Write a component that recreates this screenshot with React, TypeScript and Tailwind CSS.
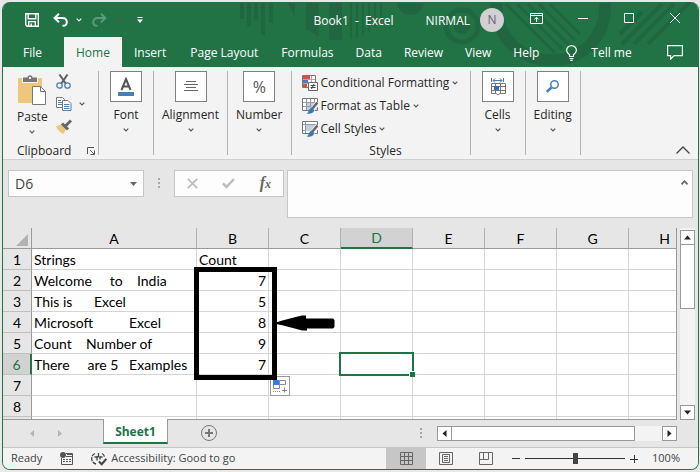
import React from 'react';
import clsx from 'clsx';

const tabs = ['File', 'Home', 'Insert', 'Page Layout', 'Formulas', 'Data', 'Review', 'View', 'Help'];
const wideTabs = ['File', 'Home', 'Insert', 'Page Layout'];

const columns = ['A', 'B', 'C', 'D', 'E', 'F', 'G', 'H'];

const rows: string[][] = [
  ['Strings', 'Count'],
  ['Welcome     to    India', '7'],
  ['This is      Excel', '5'],
  ['Microsoft          Excel', '8'],
  ['Count    Number of', '9'],
  ['There     are 5   Examples', '7'],
  [],
  [],
];

const ACTIVE_COLUMN = 'D';
const ACTIVE_ROW = 6;

function Chevron({ className = 'text-[#555]' }: { className?: string }) {
  return (
    <svg className={clsx('h-1 w-[6px] shrink-0', className)} viewBox="0 0 6 4" fill="none" stroke="currentColor" strokeWidth="1.2" aria-hidden="true">
      <path d="M0.7 0.7 3 3 5.3 0.7" />
    </svg>
  );
}

function TitleArt() {
  return (
    <svg className="pointer-events-none absolute right-0 top-0 h-16 w-[460px]" viewBox="238 2 460 64" aria-hidden="true">
      <g fill="#206741">
        <path d="M240 3h4v16h-4zM247 3h4v23h-4zM254 3h4v17h-4zM261 3h4v32h-4zM269 3h4v20h-4zM288 3h7v14zM306 3h13v34l-13-8zM329 3h13v37h-13z" />
        <path d="M350 3h2v36h-2zM356 3h2v35h-2zM362 3h2v32h-2zM368 3h2v29h-2zM374 3h2v24h-2zM380 3h2v18h-2z" />
        <path d="M397 3h27c-2 16-25 16-27 0z" />
        <circle cx="462" cy="26" r="8" />
      </g>
      <g fill="none" stroke="#206741">
        <circle cx="462" cy="26" r="16" strokeWidth="5" />
        <path d="M497 3c-3 36 27 58 57 57 32-1 53-27 51-57" strokeWidth="12" />
        <path d="M506 4l49 49M517 4l45 45M528 4l42 42M539 4l36 36M550 4l30 30" strokeWidth="3" />
        <path d="M622 44l40-40M634 44l40-40M648 44l42-42M620 34l22-22" strokeWidth="4" />
      </g>
    </svg>
  );
}

function TitleBar() {
  return (
    <div className="relative flex h-[35px] items-center text-xs text-white">
      <div className="flex flex-1 items-center pl-[22px]">
        <button type="button" aria-label="Save" className="mr-[14px]">
          <svg className="h-[14px] w-[14px]" viewBox="0 0 14 14" fill="none" stroke="currentColor" strokeWidth="1.4">
            <path d="M0.7 0.7h12.6v12.6H2.2L0.7 11.8zM3.2 0.7v5h7.6v-5M3.7 13.3V8.6h6.6v4.7M6.2 10.5v2.8" />
          </svg>
        </button>
        <button type="button" aria-label="Undo" className="flex items-center gap-2">
          <svg className="h-[14px] w-[15px]" viewBox="0 0 15 14" fill="none" stroke="currentColor" strokeWidth="2">
            <path d="M6 0.8 1.6 5 6 9.2M1.8 5h7.4c3 0 4.6 1.8 4.6 4.2 0 2-1.5 3.6-4.3 3.6" />
          </svg>
          <Chevron className="text-white" />
        </button>
        <button type="button" aria-label="Redo" className="ml-[10px] flex items-center gap-2 text-[#5a9a78]" disabled>
          <svg className="h-[14px] w-[15px]" viewBox="0 0 15 14" fill="none" stroke="currentColor" strokeWidth="2">
            <path d="M9 0.8 13.4 5 9 9.2M13.2 5H5.8C2.8 5 1.2 6.8 1.2 9.2c0 2 1.5 3.6 4.3 3.6" />
          </svg>
          <Chevron />
        </button>
        <button type="button" aria-label="Customize Quick Access Toolbar" className="ml-4">
          <svg className="h-[6px] w-[6px]" viewBox="0 0 6 6" fill="currentColor">
            <path d="M0.5 0h5v1h-5zM0 2.500h6L3 6z" />
          </svg>
        </button>
      </div>
      <div className="ml-4 whitespace-pre pt-[3px]">Book1  -  Excel</div>
      <div className="flex flex-1 items-center pl-8">
        <span className="pt-[3px]">NIRMAL</span>
        <button type="button" className="ml-[10px] h-6 w-6 shrink-0 rounded-full bg-[#d2d0d2] text-xs text-[#6b5f75]">N</button>
        <div className="ml-auto flex items-center gap-9 pb-[3px] pr-[18px]">
          <button type="button" aria-label="Ribbon Display Options" className="-mr-px">
            <svg className="h-[11px] w-[13px]" viewBox="0 0 13 11" fill="none" stroke="currentColor">
              <path d="M0.5 0.5h12v10h-12zM0.5 2.500h12M6.500 9V4.500M4.300 6.500l2.200-2.200 2.200 2.200" />
            </svg>
          </button>
          <button type="button" aria-label="Minimize">
            <svg className="h-[11px] w-[10px]" viewBox="0 0 10 11" stroke="currentColor"><path d="M0 5.500h10" /></svg>
          </button>
          <button type="button" aria-label="Maximize">
            <svg className="h-[10px] w-[10px]" viewBox="0 0 10 10" fill="none" stroke="currentColor"><path d="M0.5 0.5h9v9h-9z" /></svg>
          </button>
          <button type="button" aria-label="Close">
            <svg className="h-[10px] w-[10px]" viewBox="0 0 10 10" stroke="currentColor"><path d="M0 0l10 10M10 0L0 10" /></svg>
          </button>
        </div>
      </div>
    </div>
  );
}

function TabBar() {
  return (
    <div className="relative flex h-[30px] items-stretch pl-2 text-xs text-white">
      {tabs.map((tab) => (
        <button
          key={tab}
          type="button"
          className={clsx(
            'whitespace-nowrap pt-px',
            wideTabs.includes(tab) ? 'px-3' : 'px-[11px]',
            tab === 'Home' && 'bg-[#f3f3f3] text-[#217346]',
            tab === 'File' && 'mr-[10px]'
          )}
        >
          {tab}
        </button>
      ))}
      <button type="button" className="ml-4 flex items-center gap-[14px] whitespace-nowrap pt-px">
        <svg className="h-4 w-[11px]" viewBox="0 0 11 16" fill="none" stroke="currentColor" strokeWidth="1.2">
          <path d="M3.5 11.5v-1.7C1.800 8.500 0.600 7.200 0.600 5.300a4.900 4.700 0 0 1 9.800 0c0 1.900-1.200 3.200-2.900 4.500v1.700zM3.500 13.500h4M4.200 15.400h2.600" />
        </svg>
        Tell me
      </button>
      <button type="button" aria-label="Comments" className="ml-auto mr-[15px]">
        <svg className="h-[15px] w-4" viewBox="0 0 16 15" fill="none" stroke="currentColor" strokeWidth="1.2">
          <path d="M0.6 0.6h14.8v10H7l-3.400 3.500v-3.500h-3z" />
        </svg>
      </button>
    </div>
  );
}

function GroupButton({ label, children }: { label: string; children: React.ReactNode }) {
  return (
    <div className="my-1 flex min-w-[55px] items-start justify-center border-r border-[#b3b3b3] px-2">
      <button type="button" className="flex flex-col items-center text-xs">
        <span className="flex h-[31px] w-8 items-center justify-center border border-[#808080] bg-white">{children}</span>
        <span className="mt-[5px] leading-4">{label}</span>
        <span className="mt-[5px]"><Chevron /></span>
      </button>
    </div>
  );
}

function ConditionalIcon() {
  return (
    <svg className="h-4 w-4" viewBox="0 0 16 16" aria-hidden="true">
      <path fill="#fff" stroke="#777" d="M0.5 0.5h13v12h-13z" />
      <path stroke="#aaa" d="M9.5 1v6M1 4.5h12M1 8.5h5" />
      <path fill="#d35230" d="M1 1h7v3H1zM1 9h4v3.5H1z" />
      <path fill="#4a7ebb" d="M1 5h5v3H1z" />
      <path fill="#fff" stroke="#666" d="M6.5 7.5h9v8h-9z" />
      <path stroke="#444" d="M8.500 10.500h5M8.500 12.500h5M12 9l-2.500 5" />
    </svg>
  );
}

function TableIcon({ merged = false }: { merged?: boolean }) {
  return (
    <svg className="h-4 w-4" viewBox="0 0 16 16" aria-hidden="true">
      <path fill="#fff" stroke="#777" d="M0.5 0.5h15v12h-15z" />
      <path fill="#bcd0e8" d={merged ? 'M4 4h10v6H4z' : 'M5 5h10v7H5z'} />
      <path stroke="#999" fill="none" d={merged ? 'M3.5 1v11M1 3.5h14M1 9.5h3' : 'M4.5 1v11M8.5 1v11M12.5 1v7M1 4.5h14M1 8.5h14'} />
      <path stroke="#f3f3f3" strokeWidth="5" d="M16 4.5 9 13" />
      <path stroke="#666" strokeWidth="2.5" d="M15.5 4.5 10 11" />
      <path fill="#3b78b8" d="M9.5 9.5l2.5 2.300c.3 2.400-2.500 4.400-7.500 3.900 2.300-.7 1.800-4.800 5-6.200z" />
    </svg>
  );
}

function ClipboardGroup() {
  return (
    <div className="my-1 flex w-24 flex-col border-r border-[#b3b3b3] pl-[14px]">
      <div className="flex">
        <button type="button" className="flex flex-col items-center text-xs">
          <svg className="mt-1 h-[31px] w-7" viewBox="0 0 28 31" aria-hidden="true">
            <path fill="#eec77f" d="M0 3h24v25H0z" />
            <path fill="#f3f3f3" d="M4 3h16v5H4z" />
            <path fill="#777" d="M5 2.5h4.5C9.500-.5 14.500-.5 14.500 2.500H19V7H5z" />
            <path fill="#f3f3f3" d="M11 2h2v2h-2z" />
            <path fill="#fff" stroke="#777" d="M14.5 11.5h8l5 5v13h-13z" />
            <path fill="none" stroke="#777" d="M22.5 11.5v5h5" />
          </svg>
          <span className="mt-[3px] leading-4">Paste</span>
          <span className="mt-[5px]"><Chevron /></span>
        </button>
        <div className="ml-2 flex flex-col items-start pt-[3px]">
          <button type="button" aria-label="Cut">
            <svg className="h-[15px] w-[15px]" viewBox="0 0 15 15" fill="none" aria-hidden="true">
              <path stroke="#5f5f5f" strokeWidth="2" d="M3.5 0.5 10 10M11.5 0.5 5 10" />
              <circle cx="3.5" cy="11.5" r="2.7" stroke="#4a7ebb" strokeWidth="1.3" />
              <circle cx="11.5" cy="11.5" r="2.7" stroke="#4a7ebb" strokeWidth="1.3" />
            </svg>
          </button>
          <button type="button" aria-label="Copy" className="mt-2 flex items-center gap-[7px]">
            <svg className="h-[14px] w-4" viewBox="0 0 16 14" aria-hidden="true">
              <path fill="#fff" stroke="#777" d="M0.5 0.5h6l2 2v8h-8z" />
              <path stroke="#4a7ebb" d="M2 3.5h3M2 5.5h4M2 7.5h4" />
              <path fill="#fff" stroke="#777" d="M6.5 3.5h5.500l3 3v7H6.500z" />
              <path stroke="#4a7ebb" d="M8 7.5h5.500M8 9.500h5.500M8 11.500h5.500" />
            </svg>
            <Chevron />
          </button>
          <button type="button" aria-label="Format Painter" className="mt-2">
            <svg className="h-[15px] w-4" viewBox="0 0 16 15" aria-hidden="true">
              <path fill="#eec77f" d="M0 7.5 5 5.500l5 5L7.500 15C4 13.500 1.500 11 0 7.500z" />
              <path stroke="#666" strokeWidth="3" d="M6 4.5l6 6" />
              <path stroke="#666" strokeWidth="3" d="M9 7.5l6-6" />
            </svg>
          </button>
        </div>
      </div>
      <div className="-mb-1 mt-auto flex items-center justify-between pr-[3px] text-xs leading-4">
        Clipboard
        <button type="button" aria-label="Clipboard settings">
          <svg className="h-2 w-2" viewBox="0 0 8 8" fill="none" stroke="#555" aria-hidden="true">
            <path d="M0.5 7V0.5H7M3 3l4 4M7.500 3.500v4h-4" />
          </svg>
        </button>
      </div>
    </div>
  );
}

function StylesGroup() {
  const items = [
    { label: 'Conditional Formatting', icon: <ConditionalIcon /> },
    { label: 'Format as Table', icon: <TableIcon /> },
    { label: 'Cell Styles', icon: <TableIcon merged /> },
  ];
  return (
    <div className="my-1 flex w-[179px] flex-col border-r border-[#b3b3b3] pl-[10px]">
      {items.map((item) => (
        <button key={item.label} type="button" className="flex h-[23px] items-center gap-[3px] whitespace-nowrap text-xs">
          {item.icon}
          {item.label}
          <Chevron />
        </button>
      ))}
      <div className="-mb-1 mt-auto text-center text-xs leading-4">Styles</div>
    </div>
  );
}

function Ribbon() {
  return (
    <div className="flex h-[93px] border-b border-[#d0d0d0] bg-[#f3f3f3] text-[#262626]">
      <ClipboardGroup />
      <GroupButton label="Font">
        <svg className="h-5 w-4" viewBox="0 0 16 20" aria-hidden="true">
          <path fill="none" stroke="#555" strokeWidth="2" d="M3.5 13 8 2l4.500 11M5 9.500h6" />
          <path fill="#4a7ebb" d="M0 15h16v4H0z" />
        </svg>
      </GroupButton>
      <GroupButton label="Alignment">
        <svg className="h-[11px] w-[14px]" viewBox="0 0 14 11" stroke="#666" aria-hidden="true">
          <path d="M2 0.5h10M0 3.5h14M2 6.5h10M0 9.5h14" />
        </svg>
      </GroupButton>
      <GroupButton label="Number"><span className="text-base text-[#555]">%</span></GroupButton>
      <StylesGroup />
      <GroupButton label="Cells">
        <svg className="h-[18px] w-4" viewBox="0 0 16 18" fill="none" aria-hidden="true">
          <path stroke="#4a7ebb" d="M1.5 0v4M13.5 0v4M3 2.500h9M5 0.500l-2 2 2 2M10 0.500l2 2-2 2" />
          <path stroke="#777" d="M1.5 5.5h14v10H10l-2 1.500-2-1.500H1.500zM1.500 8.500h14M1.500 12.500h14M5.500 5.500v10M10.500 5.500v10" />
          <path fill="#2f6fb5" d="M4 8h5v4H4z" />
        </svg>
      </GroupButton>
      <GroupButton label="Editing">
        <svg className="h-[13px] w-[14px]" viewBox="0 0 14 13" fill="none" stroke="#4a7ebb" aria-hidden="true">
          <circle cx="8.5" cy="4.5" r="3.7" strokeWidth="1.5" />
          <path strokeWidth="2.5" d="M5.500 7.500.8 11.800" />
        </svg>
      </GroupButton>
      <button type="button" aria-label="Collapse the Ribbon" className="mb-[5px] ml-auto mr-2 self-end">
        <svg className="h-2 w-[14px]" viewBox="0 0 14 8" fill="none" stroke="#444" strokeWidth="1.3" aria-hidden="true">
          <path d="M0.5 7.5 7 1l6.500 6.500" />
        </svg>
      </button>
    </div>
  );
}

function Dots() {
  return (
    <svg className="h-[11px] w-[2px] shrink-0" viewBox="0 0 2 11" fill="#a8a8a8" aria-hidden="true">
      <path d="M0 0h2v2H0zM0 4h2v2H0zM0 8h2v2H0z" />
    </svg>
  );
}

function FormulaBar() {
  return (
    <div className="flex items-start px-[5px] pb-[10px] pt-[10px]">
      <div className="flex h-[27px] w-[136px] items-center border border-[#c6c6c6] bg-[#fdfdfd] pr-[6px]">
        <input aria-label="Name Box" defaultValue="D6" className="w-full min-w-0 bg-transparent pl-[6px] text-sm text-[#444] outline-none" />
        <svg className="h-1 w-[7px] shrink-0" viewBox="0 0 7 4" fill="#666" aria-hidden="true"><path d="M0 0h7L3.5 4z" /></svg>
      </div>
      <div className="flex h-[27px] w-[30px] items-center justify-center"><Dots /></div>
      <div className="flex h-[27px] w-[110px] items-center justify-between border border-[#c6c6c6] bg-[#fdfdfd] pl-3 pr-3">
        <button type="button" aria-label="Cancel">
          <svg className="h-[11px] w-[11px]" viewBox="0 0 11 11" stroke="#bdbdbd" strokeWidth="1.8" aria-hidden="true"><path d="M0.8 0.8l9.400 9.400M10.200.8.8 10.200" /></svg>
        </button>
        <button type="button" aria-label="Enter">
          <svg className="h-[11px] w-[13px]" viewBox="0 0 13 11" fill="none" stroke="#bdbdbd" strokeWidth="2.5" aria-hidden="true"><path d="M1 5.500 4.500 9 12 1" /></svg>
        </button>
        <button type="button" aria-label="Insert Function" className="font-['Liberation_Serif',serif] text-base font-bold italic leading-none text-[#666]">
          f<span className="text-xs">x</span>
        </button>
      </div>
      <div className="ml-[3px] flex h-12 flex-1 items-start border border-[#c6c6c6] bg-[#fdfdfd]">
        <input aria-label="Formula Bar" className="h-full min-w-0 flex-1 bg-transparent px-2 text-sm outline-none" />
        <button type="button" aria-label="Collapse Formula Bar" className="mr-1 mt-[9px] flex">
          <svg className="h-[5px] w-[7px]" viewBox="0 0 7 5" fill="none" stroke="#666" strokeWidth="1.7" aria-hidden="true"><path d="M0.5 4.300 3.500 1.200l3 3.100" /></svg>
        </button>
      </div>
    </div>
  );
}

function Annotations() {
  return (
    <>
      <div className="pointer-events-none absolute left-[191px] top-[39px] h-[113px] w-[83px] border-[5px] border-black" />
      <svg className="pointer-events-none absolute left-[273px] top-[87px] h-4 w-[60px]" viewBox="0 0 60 16" aria-hidden="true">
        <path d="M0 7.5C8 5 18 2 26 0.500l4 0v3h27l1.500 1.500v7L57 13.500H31V15.500H26C18 13 8 10.500 0 9z" />
      </svg>
      <button type="button" aria-label="Auto Fill Options" className="absolute left-[267px] top-[148px] -z-10 h-5 w-5 border border-[#999] bg-white">
        <svg className="h-[18px] w-[18px]" viewBox="0 0 18 18" fill="none" stroke="#888" aria-hidden="true">
          <path d="M8.500 3.500h6v4h-6zM2.500 7.500h6v4h-6zM13.500 10.500v5M11 13.500h5" />
          <path fill="#2f7cf6" stroke="none" d="M2 3h6v5H2z" />
          <path strokeDasharray="1 1" d="M2 14.500h7" />
        </svg>
      </button>
    </>
  );
}

function Sheet() {
  return (
    <div className="relative isolate h-48 min-w-0 flex-1 overflow-hidden border-b border-r border-[#999]">
      <table className="relative -z-20 w-[698px] table-fixed border-separate border-spacing-0 font-['Lato',sans-serif] text-sm leading-[18px] text-black">
        <colgroup>
          <col className="w-[29px]" />
          <col className="w-[165px]" />
          {columns.slice(1).map((column) => (
            <col key={column} className="w-[72px]" />
          ))}
        </colgroup>
        <thead>
          <tr className="h-[21px]">
            <th className="border-b border-r border-[#999] bg-[#e6e6e6] p-0">
              <svg className="ml-auto mr-[3px] mt-1 h-3 w-3" viewBox="0 0 12 12" fill="#b2b2b2" aria-hidden="true"><path d="M12 0v12H0z" /></svg>
            </th>
            {columns.map((column) => (
              <th
                key={column}
                scope="col"
                className={clsx(
                  'border-r border-r-[#b0b0b0] px-0 pb-0 font-normal',
                  column === ACTIVE_COLUMN
                    ? 'border-b-2 border-b-[#217346] bg-[#d2d2d2] pt-px text-[#217346]'
                    : 'border-b border-b-[#999] bg-[#e6e6e6] pt-[2px]'
                )}
              >
                {column}
              </th>
            ))}
          </tr>
        </thead>
        <tbody>
          {rows.map((row, i) => (
            <tr key={i} className="h-[21px]">
              <th
                scope="row"
                className={clsx(
                  'border-b border-b-[#c0c0c0] px-0 pb-0 pt-[2px] font-normal',
                  i + 1 === ACTIVE_ROW
                    ? 'border-r-2 border-r-[#217346] bg-[#d2d2d2] text-[#217346]'
                    : 'border-r border-r-[#999] bg-[#e6e6e6]'
                )}
              >
                {i + 1}
              </th>
              {columns.map((column, j) => {
                const active = column === ACTIVE_COLUMN && i + 1 === ACTIVE_ROW;
                return (
                  <td
                    key={column}
                    className={clsx(
                      'whitespace-pre border-b border-r border-[#d4d4d4] bg-white px-[2px] pb-0 pt-[2px]',
                      column === 'B' && i > 0 && 'text-right',
                      active && 'relative'
                    )}
                  >
                    {row[j]}
                    {active && (
                      <span className="absolute -bottom-[2px] -left-[2px] -right-[2px] -top-[2px] border-2 border-[#217346]">
                        <span className="absolute -bottom-[3px] -right-[3px] h-[6px] w-[6px] border-l border-t border-white bg-[#217346]" />
                      </span>
                    )}
                  </td>
                );
              })}
            </tr>
          ))}
          <tr className="h-[21px]">
            <td className="border-r border-[#999] bg-[#e6e6e6] p-0" />
            {columns.map((column) => (
              <td key={column} className="border-r border-[#d4d4d4] bg-white p-0" />
            ))}
          </tr>
        </tbody>
      </table>
      <Annotations />
    </div>
  );
}

const arrowPaths = {
  up: 'M3.5 1.5 7 5.5H0z',
  down: 'M0 1.5h7L3.5 5.5z',
  left: 'M1.5 3.5 5.5 0v7z',
  right: 'M5.5 3.5 1.5 0v7z',
};

function ScrollButton({ direction }: { direction: keyof typeof arrowPaths }) {
  return (
    <button type="button" aria-label={`Scroll ${direction}`} className="flex h-[15px] w-[15px] shrink-0 items-center justify-center border border-[#999] bg-white">
      <svg className="h-[7px] w-[7px]" viewBox="0 0 7 7" fill="#222" aria-hidden="true"><path d={arrowPaths[direction]} /></svg>
    </button>
  );
}

function SheetTabs() {
  return (
    <div className="flex h-[27px] items-start">
      <div className="flex h-[27px] w-[100px] items-center gap-6 pl-[27px]">
        <svg className="h-[7px] w-1" viewBox="0 0 4 7" fill="#b5b5b5" aria-hidden="true"><path d="M4 0v7L0 3.5z" /></svg>
        <svg className="h-[7px] w-1" viewBox="0 0 4 7" fill="#b5b5b5" aria-hidden="true"><path d="M0 0v7l4-3.5z" /></svg>
      </div>
      <button type="button" className="relative -mt-px h-[25px] w-[65px] border-b-2 border-l border-r border-b-[#217346] border-l-[#999] border-r-[#999] bg-white pt-[3px] text-xs font-bold text-[#217346]">
        Sheet1
      </button>
      <button type="button" aria-label="New sheet" className="ml-[33px] mt-[5px] flex">
        <svg className="h-4 w-4" viewBox="0 0 16 16" fill="none" stroke="#777" aria-hidden="true">
          <circle cx="8" cy="8" r="7.5" />
          <path strokeWidth="2" d="M8 4v8M4 8h8" />
        </svg>
      </button>
      <div className="ml-auto flex h-[27px] items-center gap-[15px] pr-[21px]">
        <Dots />
        <div className="flex w-60 bg-[#f3f3f3]">
          <ScrollButton direction="left" />
          <div className="w-[183px] border-y border-r border-[#999] bg-white" />
          <div className="flex-1" />
          <ScrollButton direction="right" />
        </div>
      </div>
    </div>
  );
}

function StatusBar() {
  return (
    <div className="flex h-[22px] items-center border-t border-[#c6c6c6] bg-[#f3f3f3] text-[11px] text-[#444]">
      <span className="pl-2">Ready</span>
      <button type="button" aria-label="Record Macro" className="ml-[18px]">
        <svg className="h-[13px] w-[13px]" viewBox="0 0 13 13" fill="none" stroke="#555" aria-hidden="true">
          <path d="M6 1.5h6.500v11h-11V6M6 4.500h6.500M3 7.500h2M6 7.500h2M9 7.500h2M3 9.500h2M6 9.500h2M9 9.500h2" />
          <path strokeWidth="2" d="M7 2h5" />
          <circle cx="3" cy="3" r="3" fill="#555" stroke="none" />
        </svg>
      </button>
      <button type="button" className="ml-[18px] flex items-center gap-1 whitespace-nowrap">
        <svg className="h-[14px] w-4" viewBox="0 0 16 14" fill="none" stroke="#444" strokeWidth="1.3" aria-hidden="true">
          <path d="M4 1.5C1.500 2.500.7 4.500.7 6.500c0 2.500 1.500 4.800 4.300 5.500M11 1.500c1.500.8 2.300 2 2.500 3.500M3.500 5h8M7.500 1v5" strokeDasharray="4 1" />
          <path d="M6 4.5v4M9 4.5v3" />
          <path strokeWidth="2.2" d="M8 9.5l2.700 2.700L15.300 7" />
        </svg>
        Accessibility: Good to go
      </button>
      <div className="ml-auto flex h-full items-stretch">
        <button type="button" aria-label="Normal" className="flex w-10 items-center justify-center bg-[#c6c6c6]">
          <svg className="h-[13px] w-[13px]" viewBox="0 0 13 13" fill="none" stroke="#666" aria-hidden="true">
            <path d="M0.5 0.5h12v12h-12zM4.500 0.500v12M8.500 0.500v12M0.500 4.500h12M0.500 8.500h12" />
          </svg>
        </button>
        <button type="button" aria-label="Page Layout" className="flex w-10 items-center justify-center">
          <svg className="h-[13px] w-[14px]" viewBox="0 0 14 13" fill="none" stroke="#666" aria-hidden="true">
            <path d="M0.5 0.5h13v12h-13zM3.500 2.500h7v8h-7zM5 4.500h4M5 6.500h4M5 8.500h4" />
          </svg>
        </button>
        <button type="button" aria-label="Page Break Preview" className="flex w-10 items-center justify-center">
          <svg className="h-[13px] w-[14px]" viewBox="0 0 14 13" fill="none" stroke="#666" aria-hidden="true">
            <path d="M0.5 0.5h13v12h-13zM4.500 0.500v7h5v-7M0.500 7.500h4" />
          </svg>
        </button>
      </div>
      <button type="button" aria-label="Zoom Out" className="ml-[6px]">
        <svg className="h-2 w-2" viewBox="0 0 8 8" stroke="#333" aria-hidden="true"><path d="M0 3.5h8" /></svg>
      </button>
      <input
        type="range"
        aria-label="Zoom"
        min={0}
        max={100}
        defaultValue={50}
        className="mx-[5px] h-3 w-[100px] appearance-none bg-transparent [&::-webkit-slider-runnable-track]:h-px [&::-webkit-slider-runnable-track]:bg-[#333] [&::-webkit-slider-thumb]:-mt-[5px] [&::-webkit-slider-thumb]:h-[11px] [&::-webkit-slider-thumb]:w-[5px] [&::-webkit-slider-thumb]:appearance-none [&::-webkit-slider-thumb]:bg-[#444]"
      />
      <button type="button" aria-label="Zoom In">
        <svg className="h-2 w-2" viewBox="0 0 8 8" stroke="#333" aria-hidden="true"><path d="M0 4.5h8M4.500 0v8" /></svg>
      </button>
      <button type="button" className="ml-[14px] mr-[18px]">100%</button>
    </div>
  );
}

export default function App() {
  return (
    <div className="min-h-screen bg-[#e8e8e8] pl-[2px] pr-px pt-[2px] font-['Open_Sans',sans-serif]">
      <div className="overflow-hidden rounded-lg border-x border-b border-[#217346] bg-[#e6e6e6]">
        <header className="relative bg-[#217346]">
          <TitleArt />
          <TitleBar />
          <TabBar />
        </header>
        <Ribbon />
        <FormulaBar />
        <div className="flex">
          <Sheet />
          <div className="mx-[3px] flex w-[15px] flex-col bg-[#f3f3f3] pt-[2px]">
            <ScrollButton direction="up" />
            <div className="h-16 border-x border-b border-[#999] bg-white" />
            <div className="flex-1" />
            <ScrollButton direction="down" />
          </div>
        </div>
        <SheetTabs />
        <StatusBar />
      </div>
    </div>
  );
}
